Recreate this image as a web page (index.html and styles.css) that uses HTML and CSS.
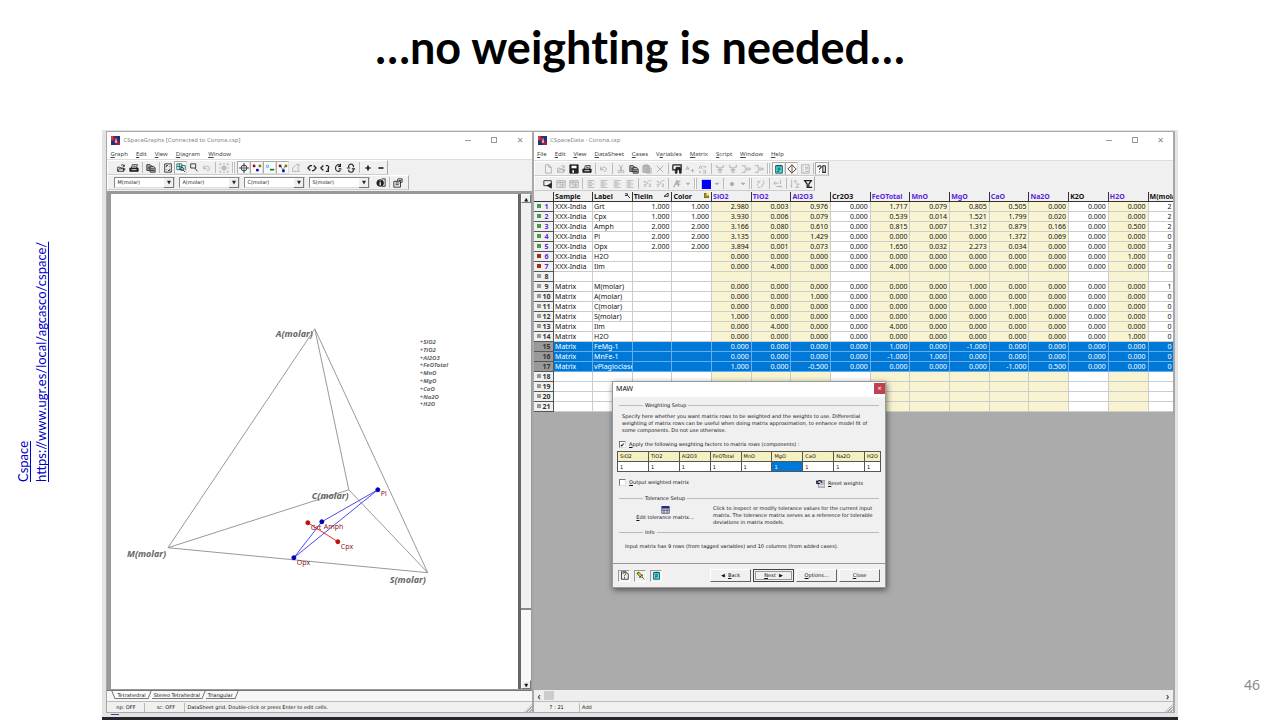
FILE: index.html
```html
<!DOCTYPE html>
<html lang="en">
<head>
<meta charset="utf-8">
<title>…no weighting is needed…</title>
<link rel="stylesheet" href="styles.css">
</head>
<body>
<svg class="sprite" aria-hidden="true">
  <symbol id="open" viewBox="0 0 12 12"><path d="M2 10V5h3l1 1h3v4zM2 10l2-3h7l-2 3M6 3c2-2 3-1 4 1M10 2v2H8"/></symbol>
  <symbol id="print" viewBox="0 0 12 12"><path class="solid" d="M1 6h10v4H1z"/><path d="M3 6l1-4h6L9 6M5 4h3"/><path class="lite" d="M3 8h6"/></symbol>
  <symbol id="copy" viewBox="0 0 12 12"><path class="tint" d="M1 2h4l2 2v5H1z"/><path class="tint" d="M5 4h4l2 2v5H5z"/><path d="M2 5h3M2 7h3M6 7h4M6 9h4"/></symbol>
  <symbol id="fit" viewBox="0 0 12 12"><path d="M2 1h8v10H2z"/><path d="M4 5V3h2M8 7v2H6M4 8h1M7 4h1"/></symbol>
  <symbol id="zoomgrid" viewBox="0 0 12 12"><path d="M1 1h6v7H1zM7 3h4v6M1 4h6M4 1v7" stroke="#066"/><circle cx="7" cy="7" r="2"/><path d="M8 8l3 3"/></symbol>
  <symbol id="zoom" viewBox="0 0 12 12"><path d="M2 1h6v5H2zM7 6l3 4"/></symbol>
  <symbol id="undo" viewBox="0 0 12 12"><path d="M2 3v4h4M2 7c2-4 6-4 7-1 0 2-1 3-3 3"/></symbol>
  <symbol id="select" viewBox="0 0 12 12"><path d="M1 3V1h2M9 1h2v2M11 9v2H9M3 11H1V9M1 5v2M11 5v2M5 1h2M5 11h2M6 3v6M3 6h6M4 4h4v4H4z"/></symbol>
  <symbol id="target" viewBox="0 0 12 12"><circle cx="6" cy="6" r="3.5"/><path d="M0 6h12M6 0v5M6 7v5"/></symbol>
  <symbol id="dots" viewBox="0 0 12 12"><path d="M1 2h3v3H1z" fill="#900" stroke="none"/><path d="M8 2h3v3H8z" fill="#960" stroke="none"/><path d="M5 7h3v3H5z" fill="#00a" stroke="none"/></symbol>
  <symbol id="link" viewBox="0 0 12 12"><circle cx="3" cy="4" r="1.5" stroke="#0ae"/><path d="M6 8h5" stroke="#080" stroke-width="2"/></symbol>
  <symbol id="tri" viewBox="0 0 12 12"><path d="M3 3l3 6 3-6" stroke="#0aa"/><path d="M1 2h3v3H1z" fill="#900" stroke="none"/><path d="M8 2h3v3H8z" fill="#960" stroke="none"/><path d="M5 8h3v3H5z" fill="#00a" stroke="none"/></symbol>
  <symbol id="poly" viewBox="0 0 12 12"><path d="M2 10V6l4-4h4L8 6l2 4z"/></symbol>
  <symbol id="rotl" viewBox="0 0 12 12"><path d="M4 3L1 6l3 3M8 3l3 3-3 3M4 3h2M6 9h2" stroke-width="1.5"/></symbol>
  <symbol id="rotr" viewBox="0 0 12 12"><path d="M4 3L1 6l3 3M7 3h2c2 1 2 3 0 5M10 6v4H7" stroke-width="1.5"/></symbol>
  <symbol id="rotu" viewBox="0 0 12 12"><path d="M9 4C8 0 3 2 3 6s3 5 6 3M9 1v3H6M7 7h3" stroke-width="1.3"/></symbol>
  <symbol id="rotd" viewBox="0 0 12 12"><path d="M3 5c0-5 6-5 6 0M3 8c0 4 6 4 6 0M1 6h4M7 7h4" stroke-width="1.3"/></symbol>
  <symbol id="plus" viewBox="0 0 12 12"><path d="M3 6h6M6 3v6" stroke-width="2"/></symbol>
  <symbol id="minus" viewBox="0 0 12 12"><path d="M3 6h6" stroke-width="2"/></symbol>
  <symbol id="info" viewBox="0 0 12 12"><path d="M7 1h4v9H7"/><circle class="solid" cx="5" cy="6" r="4"/><path class="lite" d="M5 5v4M5 3v1" stroke-width="1.5"/></symbol>
  <symbol id="props" viewBox="0 0 12 12"><path d="M1 4h8v7H1zM3 6h4M3 8h4M5 4l1-3h5v4L8 6M7 3h3"/></symbol>
  <symbol id="new" viewBox="0 0 12 12"><path d="M3 1h4l3 3v7H3zM7 1v3h3"/></symbol>
  <symbol id="save" viewBox="0 0 12 12"><path class="solid" d="M1 1h10v10H1z"/><path class="lite" d="M3 3.5h6M4 9h2" stroke-width="3"/></symbol>
  <symbol id="cut" viewBox="0 0 12 12"><path d="M4 1l3 7M8 1L5 8"/><circle cx="4" cy="9" r="1.5"/><circle cx="8" cy="9" r="1.5"/></symbol>
  <symbol id="paste" viewBox="0 0 12 12"><path class="tint" d="M1 2h8v8H1z"/><path d="M3 1h4v2H3zM5 5h6v6H5zM6 7h4M6 9h4"/></symbol>
  <symbol id="del" viewBox="0 0 12 12"><path d="M2 2l8 8M10 2l-8 8"/></symbol>
  <symbol id="find" viewBox="0 0 12 12"><path d="M1 1h10v6M1 1v6h3" stroke-width="1.5"/><path class="solid" d="M4 6h2v5H4zM9 6h2v5H9zM5 4h5v3H5z"/></symbol>
  <symbol id="findnext" viewBox="0 0 12 12"><path d="M1 7l2-4 2 4M2 6h2M7 8h4M9 6v4"/></symbol>
  <symbol id="replace" viewBox="0 0 12 12"><path d="M1 6l2-4 2 4M6 3h3v2M6 8h3v3H6M2 8v2h2"/></symbol>
  <symbol id="coladd" viewBox="0 0 12 12"><path d="M2 1v3h3M10 1v3H7M5 4v7M7 4v7M3 7h6"/></symbol>
  <symbol id="rowadd" viewBox="0 0 12 12"><path d="M1 2h4v3M1 10h4V7M5 5h6v2H5"/></symbol>
  <symbol id="notes" viewBox="0 0 12 12"><path d="M2 2h8v9H2z" fill="#5dd" stroke="#044"/><path d="M4 1v2M6 1v2M8 1v2M4 5h4M4 7h4M4 9h2" stroke="#044"/></symbol>
  <symbol id="diamond" viewBox="0 0 12 12"><path d="M6 1l5 5-5 5-5-5z"/><path d="M6 1v10" stroke="#630"/></symbol>
  <symbol id="list" viewBox="0 0 12 12"><path d="M2 1h9v10H2zM4 3v1M6 4h4M4 6v1M6 6h4M4 9v1M6 9h4"/></symbol>
  <symbol id="whats" viewBox="0 0 12 12"><path d="M1 4c0-3 5-2 4 0-1 1-2 1-2 3M3 9v1M10 2H7v8h3V2" stroke-width="1.3"/></symbol>
  <symbol id="board" viewBox="0 0 12 12"><path d="M1 2h9v6H1z"/><path class="solid" d="M5 8l5-3v6L7 9z"/></symbol>
  <symbol id="grid" viewBox="0 0 12 12"><path d="M1 2h10v8H1zM1 4h10M5 2v8M8 4v6M2 6h2M6 7h4"/></symbol>
  <symbol id="lines" viewBox="0 0 12 12"><path d="M2 2h8M2 4h5M2 6h8M2 8h5M2 10h8"/></symbol>
  <symbol id="percent" viewBox="0 0 12 12"><path d="M8 2l-5 8M2 3h2v2M2 7h2M8 6h2v3H8M9 2h2"/></symbol>
  <symbol id="font" viewBox="0 0 12 12"><path d="M2 10l4-8 2 7M4 6h6M7 4l3-2" stroke-width="1.5"/></symbol>
  <symbol id="caret" viewBox="0 0 12 12"><path class="solid" d="M4 5h4L6 7z"/></symbol>
  <symbol id="blue" viewBox="0 0 12 12"><path d="M1 1h11v11H1z" fill="#00f" stroke="none"/></symbol>
  <symbol id="dot" viewBox="0 0 12 12"><circle class="solid" cx="6" cy="6" r="2"/></symbol>
  <symbol id="slashes" viewBox="0 0 12 12"><path d="M5 2L1 8M10 4L6 10M1 3h2M8 2l2 1M2 10h3"/></symbol>
  <symbol id="swap" viewBox="0 0 12 12"><path d="M1 5h6M9 1v5M3 3L1 5l2 2M4 9h6M8 8l3 2"/></symbol>
  <symbol id="sort" viewBox="0 0 12 12"><path d="M2 1v9l-1-2M5 2h2v2H5M7 6h4L7 10h4"/></symbol>
  <symbol id="filter" viewBox="0 0 12 12"><path d="M2 2h8L7 6v4H5V6zM7 10h4" stroke-width="1.5"/></symbol>
  <symbol id="logo" viewBox="0 0 12 12"><path d="M0 0h12v12H0z" fill="#203080" stroke="none"/><path d="M0 0h4l8 9v3H7z" fill="#a02050" stroke="none"/><path d="M0 0h3v6H0z" fill="#d04040" stroke="none"/><path d="M5 9l2-7 1 7z" fill="#ffd090" stroke="none"/></symbol>
</svg>

<main class="slide">
  <h1 class="title">…no weighting is needed…</h1>
  <aside class="source"><a href="https://www.ugr.es/local/agcasco/cspace/">Cspace<br>https://www.ugr.es/local/agcasco/cspace/</a></aside>

  <section class="desktop">
    <div class="windows">
      <section class="window graphs">
        <header class="titlebar"><svg class="logo"><use href="#logo"/></svg><span>CSpaceGraphs [Connected to Corona.csp]</span><div class="controls"><i class="min"></i><i class="max"></i><i class="close">×</i></div></header>
        <nav class="menu"><button><u>G</u>raph</button><button><u>E</u>dit</button><button><u>V</u>iew</button><button><u>D</u>iagram</button><button><u>W</u>indow</button></nav>
        <div class="bar" data-icons="open print | copy | fit zoomgrid* zoom undo- | select- || target* dots* link* tri* poly- ! rotl rotr rotu rotd | plus minus"></div>
        <div class="bar combos">
          <span class="combo"><select aria-label="First apex"><option>M(molar)</option></select></span>
          <span class="combo"><select aria-label="Second apex"><option>A(molar)</option></select></span>
          <span class="combo"><select aria-label="Third apex"><option>C(molar)</option></select></span>
          <span class="combo"><select aria-label="Fourth apex"><option>S(molar)</option></select></span>
          <div class="pair"><button class="tool" aria-label="Information"><svg><use href="#info"/></svg></button><i class="sep"></i><button class="tool" aria-label="Properties"><svg><use href="#props"/></svg></button></div>
        </div>
        <div class="plot">
          <svg class="diagram" viewBox="111 194 407 480" preserveAspectRatio="xMidYMin meet" role="img" aria-label="Tetrahedral diagram">
            <path class="edge" d="M315 329L168 548 428 573ZM315 329L349 490 428 573M349 490L168 548"/>
            <path class="tie" d="M378 490L322 522 294 558Z"/>
            <path class="tie red" d="M308 523L338 542"/>
            <g class="bluedot"><circle cx="378" cy="490" r="2"/><circle cx="322" cy="522" r="2"/><circle cx="294" cy="558" r="2"/></g>
            <g class="reddot"><circle cx="308" cy="523" r="2"/><circle cx="338" cy="542" r="2"/></g>
            <g class="apex"><text x="276" y="337">A(molar)</text><text x="312" y="499">C(molar)</text><text x="127" y="557">M(molar)</text><text x="390" y="583">S(molar)</text></g>
            <g class="phase"><text x="381" y="496">Pl</text><text x="311" y="530">Grt</text><text x="324" y="529">Amph</text><text x="341" y="549">Cpx</text><text x="297" y="565">Opx</text></g>
            <g class="added"><text x="420" y="344">+SiO2</text><text x="420" y="352">+TiO2</text><text x="420" y="360">+Al2O3</text><text x="420" y="367">+FeOTotal</text><text x="420" y="375">+MnO</text><text x="420" y="383">+MgO</text><text x="420" y="391">+CaO</text><text x="420" y="399">+Na2O</text><text x="420" y="406">+H2O</text></g>
          </svg>
          <div class="vscroll"><button aria-label="Scroll up">▲</button><i></i><button aria-label="Scroll down">▼</button></div>
        </div>
        <div class="tabs"><button class="on">Tetrahedral</button><button>Stereo Tetrahedral</button><button>Triangular</button></div>
        <footer class="status"><span class="cell">np: OFF</span><span class="cell">sc: OFF</span><span>DataSheet grid. Double-click or press Enter to edit cells.</span><i class="grip"></i></footer>
      </section>

      <section class="window data">
        <header class="titlebar"><svg class="logo"><use href="#logo"/></svg><span>CSpaceData - Corona.csp</span><div class="controls"><i class="min"></i><i class="max"></i><i class="close">×</i></div></header>
        <nav class="menu"><button><u>F</u>ile</button><button><u>E</u>dit</button><button><u>V</u>iew</button><button><u>D</u>ataSheet</button><button><u>C</u>ases</button><button>V<u>a</u>riables</button><button><u>M</u>atrix</button><button><u>S</u>cript</button><button><u>W</u>indow</button><button><u>H</u>elp</button></nav>
        <div class="bar" data-icons="new- open- save print | undo- | cut- copy paste- del- | find findnext- replace- | coladd- coladd- rowadd- rowadd- || notes* diamond* list- | whats*"></div>
        <div class="bar" data-icons="board grid- grid- | lines- lines- lines- lines- | percent- percent- | font- caret-~ || blue caret-~ | dot- caret-~ || slashes- | swap- | sort- filter"></div>
        <div class="sheetarea">
          <table class="sheet">
            <colgroup><col class="c-num"><col class="c-sample"><col span="14"><col class="c-last"></colgroup>
            <thead><tr></tr></thead>
            <tbody></tbody>
          </table>

          <form class="dialog">
            <header><span>MAW</span><button type="button" aria-label="Close dialog">×</button></header>
            <div class="body">
              <h2>Weighting Setup</h2>
              <p class="intro">Specify here whether you want matrix rows to be weighted and the weights to use. Differential weighting of matrix rows can be useful when doing matrix approximation, to enhance model fit of some components. Do not use otherwise.</p>
              <label class="check"><input type="checkbox" checked><span><u>A</u>pply the following weighting factors to matrix rows (components) :</span></label>
              <table class="weights">
                <colgroup><col span="8"><col class="w-last"></colgroup>
                <thead><tr><th>SiO2</th><th>TiO2</th><th>Al2O3</th><th>FeOTotal</th><th>MnO</th><th>MgO</th><th>CaO</th><th>Na2O</th><th>H2O</th></tr></thead>
                <tbody><tr><td><input aria-label="SiO2" value="1"></td><td><input aria-label="TiO2" value="1"></td><td><input aria-label="Al2O3" value="1"></td><td><input aria-label="FeOTotal" value="1"></td><td><input aria-label="MnO" value="1"></td><td class="on"><input aria-label="MgO" value="1"></td><td><input aria-label="CaO" value="1"></td><td><input aria-label="Na2O" value="1"></td><td><input aria-label="H2O" value="1"></td></tr></tbody>
              </table>
              <div class="split">
                <label class="check"><input type="checkbox"><span><u>O</u>utput weighted matrix</span></label>
                <button type="button" class="flat"><svg viewBox="0 0 12 12"><path d="M3 2h9v9H3z" fill="#bbc" stroke="#889"/><path d="M1 2v4h4M1 5c2-4 6-4 7 0" stroke="#113" stroke-width="1.5"/><path d="M4 9h7" stroke="#fff"/></svg><span><u>R</u>eset weights</span></button>
              </div>
              <h2>Tolerance Setup</h2>
              <div class="tolerance">
                <button type="button" class="flat stack"><svg viewBox="0 0 12 12"><path d="M1 2h10v9H1z" fill="#dde" stroke="#446"/><path d="M1 3h10" stroke="#228" stroke-width="3"/><path d="M1 7h10M4 4v7M8 4v7" stroke="#446"/></svg><span><u>E</u>dit tolerance matrix...</span></button>
                <p>Click to inspect or modify tolerance values for the current input matrix. The tolerance matrix serves as a reference for tolerable deviations in matrix models.</p>
              </div>
              <h2>Info</h2>
              <p class="note">Input matrix has 9 rows (from tagged variables) and 10 columns (from added cases).</p>
            </div>
            <footer>
              <button type="button" class="square" aria-label="Help"><svg viewBox="0 0 12 12"><path d="M2 1h6l3 3v7H2zM4 4c0-3 5-2 4 0-1 1-2 1-2 3M6 8v2"/></svg></button>
              <button type="button" class="square" aria-label="Pin"><svg viewBox="0 0 12 12"><path d="M2 2l6 6" stroke="#550" stroke-width="4"/><path d="M3 3l5 5" stroke="#dd3" stroke-width="2"/><path d="M8 8l3 3M4 9l5-4" stroke="#330"/></svg></button>
              <button type="button" class="square" aria-label="Notes"><svg><use href="#notes"/></svg></button>
              <i class="push"></i>
              <button type="button" class="cmd">◀&nbsp; <u>B</u>ack</button>
              <button type="button" class="cmd default"><u>N</u>ext &nbsp;▶</button>
              <button type="button" class="cmd"><u>O</u>ptions...</button>
              <button type="button" class="cmd"><u>C</u>lose</button>
            </footer>
          </form>
        </div>
        <div class="hscroll"><button aria-label="Scroll left">‹</button><i></i><button aria-label="Scroll right">›</button></div>
        <footer class="status"><span class="cell wide">7 : 21</span><span>Add</span><i class="grip"></i></footer>
      </section>
    </div>
    <div class="under"><i></i></div>
  </section>
  <span class="page">46</span>
</main>
<script src="app.js"></script>
</body>
</html>
```
FILE: styles.css
```css
* { box-sizing: border-box; }
body { margin: 0; background: #fff; color: #111; font-family: "Noto Sans", sans-serif; }
button, input, select { font: inherit; color: inherit; margin: 0; padding: 0; border: 0; background: none; border-radius: 0; }
p, h1, h2 { margin: 0; font-weight: normal; }
svg { fill: none; stroke: currentColor; display: block; }
svg .solid { fill: currentColor; }
svg .tint { fill: #bbb; }
svg .lite { stroke: #fff; }
.sprite { display: none; }

.slide { display: grid; grid-template: 130px 1fr / 8fr 84fr 8fr; min-height: 100vh; }
.title { grid-column: 1 / -1; padding-top: 18px; text-align: center; font: bold 45px/58px Lato, sans-serif; font-variant-ligatures: none; color: #000; }
.source { writing-mode: vertical-rl; transform: rotate(180deg); padding: 238px 14px 0 0; font: 13px/18px Lato, sans-serif; }
.source a { color: #0000c8; white-space: nowrap; }
.page { align-self: end; padding: 0 20px 22px 0; text-align: right; font-size: 14px; line-height: 26px; color: #8b8b8b; }

.desktop { display: flex; flex-direction: column; background: #e4e4e4; border-bottom: 3px solid #25262d; }
.windows { flex: 1; display: flex; margin: 1px 3px 0 4px; }
.window { display: flex; flex-direction: column; background: #f0f0f0; border: 1px solid #a8a8a8; min-width: 0; }
.graphs { flex: 427; }
.data { flex: 642; border-right-width: 2px; }
.under { height: 4px; padding: 1px 9px; }
.under i { display: block; width: 8px; height: 1px; background: #4040a0; }

.titlebar { display: flex; align-items: center; gap: 3px; height: 16px; padding: 0 4px; background: #fff; color: #888; font-size: 6px; }
.logo { width: 9px; height: 9px; }
.controls { margin-left: auto; display: flex; align-items: center; gap: 20px; padding-right: 5px; }
.controls i { width: 6px; height: 6px; border: 0 solid #999; font: 11px/5px "Noto Sans", sans-serif; }
.controls .min { height: 1px; border-top-width: 1px; }
.controls .max { border-width: 1px; }
.menu { display: flex; gap: 8px; height: 12px; padding: 0 3px; background: #fff; color: #444; font-size: 6px; line-height: 12px; border-bottom: 1px solid #ddd; }
.data .menu { height: 13px; }
.bar { display: flex; align-items: center; align-self: flex-start; height: 15px; padding-left: 6px; color: #222; border: 1px solid #fff; border-right-color: #aaa; border-bottom-color: #ccc; }
.tool { width: 13px; height: 13px; display: grid; place-items: center; }
.tool svg { width: 10px; height: 10px; }
.tool.off { color: #aaa; }
.tool.off svg .tint { fill: #ddd; }
.tool.narrow { width: 9px; }
.tool.down { background: #fafafa; border: 1px solid #ddd; border-top-color: #aaa; border-left-color: #aaa; }
.sep { width: 1px; height: 11px; margin: 0 1px 0 2px; background: #bbb; }
.sep.double { width: 3px; margin: 0 2px; border: 1px solid #bbb; border-width: 0 1px; background: #fff; }
.gap { width: 3px; }

.combos { gap: 4px; padding-right: 4px; font: 5px/9px "DejaVu Sans", sans-serif; }
.pair { display: flex; align-items: center; }
.combo { position: relative; width: 61px; height: 11px; background: #fff; border: 1px solid #888; border-right-color: #ddd; border-bottom-color: #ddd; }
.combo select { appearance: none; display: block; width: 100%; height: 9px; padding-left: 2px; }
.combo::after { content: "▼"; position: absolute; right: 0; top: 0; width: 9px; height: 9px; background: #f0f0f0; border-right: 1px solid #777; border-bottom: 1px solid #777; font: 5px/8px "DejaVu Sans", sans-serif; text-align: center; pointer-events: none; }

.plot { flex: 1; display: flex; min-height: 0; margin-top: 1px; background: #fff; border: solid #999; border-width: 3px 1px 1px 4px; }
.diagram { flex: 1; min-width: 0; height: auto; stroke: none; }
.edge { fill: none; stroke: #999; }
.tie { fill: none; stroke: #4848e8; }
.tie.red { stroke: #e03030; }
.bluedot { fill: #0000b8; stroke: #0000b8; }
.reddot { fill: #b81010; stroke: #b81010; }
.apex { font: italic bold 9px "Noto Sans", sans-serif; fill: #666; }
.phase { font: 7px "Noto Sans", sans-serif; fill: #901818; }
.added { font: italic bold 6px "Noto Sans", sans-serif; fill: #666; }
.vscroll { display: flex; flex-direction: column; width: 13px; background: #f0f0f0; border-left: 3px solid #666; font: 5px/8px "DejaVu Sans", sans-serif; }
.vscroll button { height: 9px; border: 1px solid #fff; border-right-color: #777; border-bottom-color: #777; }
.vscroll i { flex: 1; background: linear-gradient(#f0f0f0 0 85%, #888 85% 85.3%, #f8f8f8 85.3%); }

.tabs { display: flex; gap: 4px; height: 11px; padding-left: 8px; background: #f7f7f7; border-top: 1px solid #777; font: 5px/8px "DejaVu Sans", sans-serif; }
.tabs button { position: relative; padding: 0 2px; height: 8px; border-bottom: 1px solid #777; }
.tabs button::before, .tabs button::after { content: ""; position: absolute; top: 0; right: -2px; width: 1px; height: 8px; background: #777; transform: skewX(-22deg); }
.tabs button::before { right: auto; left: -2px; transform: skewX(22deg); }
.tabs button + button::before { display: none; }
.tabs .on { background: #fff; }
.status { display: flex; align-items: center; gap: 2px; height: 11px; border-top: 1px solid #bbb; font: 5px/9px "DejaVu Sans", sans-serif; }
.cell { width: 38px; text-align: center; border-right: 1px solid #bbb; }
.cell.wide { width: 46px; }
.grip { width: 8px; height: 8px; margin-left: auto; align-self: flex-end; background: repeating-linear-gradient(135deg, #f0f0f0 0 1px, #aaa 1px 2px); clip-path: polygon(100% 0, 100% 100%, 0 100%); }
.hscroll { display: flex; align-items: center; height: 11px; background: #eee; font-size: 10px; line-height: 8px; }
.hscroll button { width: 10px; height: 10px; }
.hscroll i { width: 10px; height: 9px; background: #ccc; margin-right: auto; }

.sheetarea { position: relative; flex: 1; margin-top: 1px; background: #ababab; }
.sheet { width: 100%; table-layout: fixed; border-collapse: separate; border-spacing: 0; background: #fff; font-size: 7px; line-height: 9px; }
.c-num { width: 20px; }
.c-sample { width: 39px; }
.c-last { width: 24px; }
.sheet th, .sheet td { height: 10px; padding: 0 2px 0 1px; overflow: hidden; white-space: nowrap; text-align: left; border: solid #ccc; border-width: 0 1px 1px 0; }
.sheet thead th { background: #f0f0f0; border-color: #333; }
.sheet .num { text-align: right; }
.sheet .tag { color: #5a1edc; }
.sheet td.tagged { background: #f8f3d0; }
.sheet tbody th { color: #333; text-align: center; background: #f0f0f0; border-color: #555; font-weight: bold; padding-left: 8px; background-image: linear-gradient(#999, #999); background-size: 4px 4px; background-position: 3px 2px; background-repeat: no-repeat; }
.sheet tbody th.green { color: #5a1edc; background-image: linear-gradient(#4a9a4a, #4a9a4a); }
.sheet tbody th.red { color: #5a1edc; background-image: linear-gradient(#a03010, #a03010); }
.sheet .picked td, .sheet .picked td.tagged { background: #0078d7; color: #fff; border-color: #66aee8; }
.sheet .picked th { background-color: #999; }
.sheet td:nth-child(3) { padding-right: 0; }
.sheet .clip { text-align: left; padding-left: 19px; padding-right: 0; border-right: 0; }
.sheet thead .clip { padding-left: 1px; }
.mark { float: right; width: 5px; height: 5px; margin-top: 1px; }

.dialog { position: absolute; left: 78px; top: 189px; width: 274px; display: flex; flex-direction: column; background: #f0f0f0; border: 1px solid #999; box-shadow: 1px 2px 6px #0008; font: 5px/7px "DejaVu Sans", sans-serif; }
.dialog header { display: flex; align-items: center; justify-content: space-between; height: 15px; padding: 0 0 2px 3px; background: #fff; font: 7px "Noto Sans", sans-serif; }
.dialog header button { width: 11px; height: 11px; background: #c04050; color: #fff; line-height: 10px; }
.dialog .body { padding: 4px 4px 0; height: 167px; border-bottom: 1px solid #999; }
.dialog h2 { display: flex; align-items: center; gap: 2px; height: 8px; margin: 0 2px; font-size: 5px; }
.dialog h2::before, .dialog h2::after { content: ""; height: 1px; background: #bbb; width: 24px; }
.dialog h2::after { flex: 1; }
.dialog .intro { padding: 4px 8px 0 5px; }
.check { display: flex; align-items: center; gap: 3px; height: 10px; margin: 5px 2px 2px; }
.check input { appearance: none; width: 7px; height: 7px; background: #fff; border: 1px solid #777; border-right-color: #ddd; border-bottom-color: #ddd; display: grid; place-items: center; }
.check input:checked::after { content: "✔"; font: 6px/6px "DejaVu Sans", sans-serif; color: #000; }
.weights { width: 100%; table-layout: fixed; border-collapse: separate; border-spacing: 0; border: solid #555; border-width: 1px 0 0 1px; }
.weights th, .weights td { padding: 0 0 0 2px; height: 10px; font-weight: normal; text-align: left; border: solid #555; border-width: 0 1px 1px 0; background: #fff; }
.weights th { background: #f5f0c0; }
.weights td.on { background: #0078d7; color: #fff; }
.weights input { display: block; width: 100%; height: 8px; }
.w-last { width: 16px; }
.split { display: flex; justify-content: space-between; margin-bottom: 5px; }
.flat { display: flex; align-items: center; gap: 3px; }
.flat svg { width: 9px; height: 9px; }
.split .flat { margin: 6px 18px 0 0; }
.stack { flex-direction: column; width: 96px; gap: 0; }
.tolerance { display: flex; padding-top: 3px; height: 26px; }
.tolerance p { flex: 1; padding-right: 4px; }
.note { padding: 7px 8px; }
.dialog footer { display: flex; align-items: center; gap: 2px; height: 23px; padding: 0 5px; }
.square { width: 12px; height: 12px; margin-right: 2px; display: grid; place-items: center; border: 1px solid #999; border-right-color: #fff; border-bottom-color: #fff; }
.square svg { width: 9px; height: 9px; }
.push { flex: 1; }
.cmd { width: 41px; height: 13px; border: 1px solid #fff; border-right-color: #666; border-bottom-color: #666; }
.cmd.default { border: 1px solid #444; outline: 1px solid #999; outline-offset: -3px; }
```
FILE: app.js
```js
const svgUse = (id) => `<svg><use href="#${id}"/></svg>`;

// Toolbar notation: "-" disabled, "*" pressed, "~" narrow, "|" separator, "||" group edge, "!" gap.
document.querySelectorAll("[data-icons]").forEach((bar) => {
  bar.innerHTML = bar.dataset.icons.split(" ").map((item) => {
    if (item === "|") return '<i class="sep"></i>';
    if (item === "||") return '<i class="sep double"></i>';
    if (item === "!") return '<i class="gap"></i>';
    const id = item.replace(/[-*~]/g, "");
    const cls = ["tool", item.includes("-") && "off", item.includes("*") && "down", item.includes("~") && "narrow"].filter(Boolean).join(" ");
    return `<button class="${cls}" aria-label="${id}">${svgUse(id)}</button>`;
  }).join("");
});

const columns = ["", "Sample", "Label", "Tielin", "Color", "SiO2", "TiO2", "Al2O3", "Cr2O3", "FeOTotal", "MnO", "MgO", "CaO", "Na2O", "K2O", "H2O", "M(molar)"];
const tagged = new Set([5, 6, 7, 9, 10, 11, 12, 13, 15]);
const marks = {
  Label: '<svg class="mark" viewBox="0 0 6 6"><path d="M0 1h3v2H0M3 3l3 3"/></svg>',
  Tielin: '<svg class="mark" viewBox="0 0 6 6"><path d="M0 4h5V0L0 4"/></svg>',
  Color: '<svg class="mark" viewBox="0 0 6 6"><path d="M0 0h6v6H0z" fill="#a83" stroke="#553"/><path d="M3 0h3v3H3z" fill="#fe5" stroke="none"/></svg>'
};
const z = "0.000";
const rows = [
  ["XXX-India", "Grt", "1.000", "1.000", "2.980", "0.003", "0.976", z, "1.717", "0.079", "0.805", "0.505", z, z, z, "2"],
  ["XXX-India", "Cpx", "1.000", "1.000", "3.930", "0.006", "0.079", z, "0.539", "0.014", "1.521", "1.799", "0.020", z, z, "2"],
  ["XXX-India", "Amph", "2.000", "2.000", "3.166", "0.080", "0.610", z, "0.815", "0.007", "1.312", "0.879", "0.166", z, "0.500", "2"],
  ["XXX-India", "Pl", "2.000", "2.000", "3.135", z, "1.429", z, z, z, z, "1.372", "0.069", z, z, "0"],
  ["XXX-India", "Opx", "2.000", "2.000", "3.894", "0.001", "0.073", z, "1.650", "0.032", "2.273", "0.034", z, z, z, "3"],
  ["XXX-India", "H2O", "", "", z, z, z, z, z, z, z, z, z, z, "1.000", "0"],
  ["XXX-India", "Ilm", "", "", z, "4.000", z, z, "4.000", z, z, z, z, z, z, "0"],
  [],
  ["Matrix", "M(molar)", "", "", z, z, z, z, z, z, "1.000", z, z, z, z, "1"],
  ["Matrix", "A(molar)", "", "", z, z, "1.000", z, z, z, z, z, z, z, z, "0"],
  ["Matrix", "C(molar)", "", "", z, z, z, z, z, z, z, "1.000", z, z, z, "0"],
  ["Matrix", "S(molar)", "", "", "1.000", z, z, z, z, z, z, z, z, z, z, "0"],
  ["Matrix", "Ilm", "", "", z, "4.000", z, z, "4.000", z, z, z, z, z, z, "0"],
  ["Matrix", "H2O", "", "", z, z, z, z, z, z, z, z, z, z, "1.000", "0"],
  ["Matrix", "FeMg-1", "", "", z, z, z, z, "1.000", z, "-1.000", z, z, z, z, "0"],
  ["Matrix", "MnFe-1", "", "", z, z, z, z, "-1.000", "1.000", z, z, z, z, z, "0"],
  ["Matrix", "vPlagioclase", "", "", "1.000", z, "-0.500", z, z, z, z, "-1.000", "0.500", z, z, "0"],
  [], [], [], []
];

document.querySelector(".sheet thead tr").innerHTML = columns.map((name, i) =>
  `<th class="${tagged.has(i) ? "tag" : ""} ${i === 16 ? "clip" : ""}">${marks[name] || ""}${name}</th>`).join("");

document.querySelector(".sheet tbody").innerHTML = rows.map((row, r) => {
  const state = r < 5 ? "green" : r < 7 ? "red" : "";
  let cells = `<th class="${state}">${r + 1}</th>`;
  for (let i = 1; i <= 16; i++) {
    cells += `<td class="${tagged.has(i) ? "tagged" : ""} ${i > 2 ? "num" : ""} ${i === 16 ? "clip" : ""}">${row[i - 1] || ""}</td>`;
  }
  return `<tr class="${r > 13 && r < 17 ? "picked" : ""}">${cells}</tr>`;
}).join("");
```
